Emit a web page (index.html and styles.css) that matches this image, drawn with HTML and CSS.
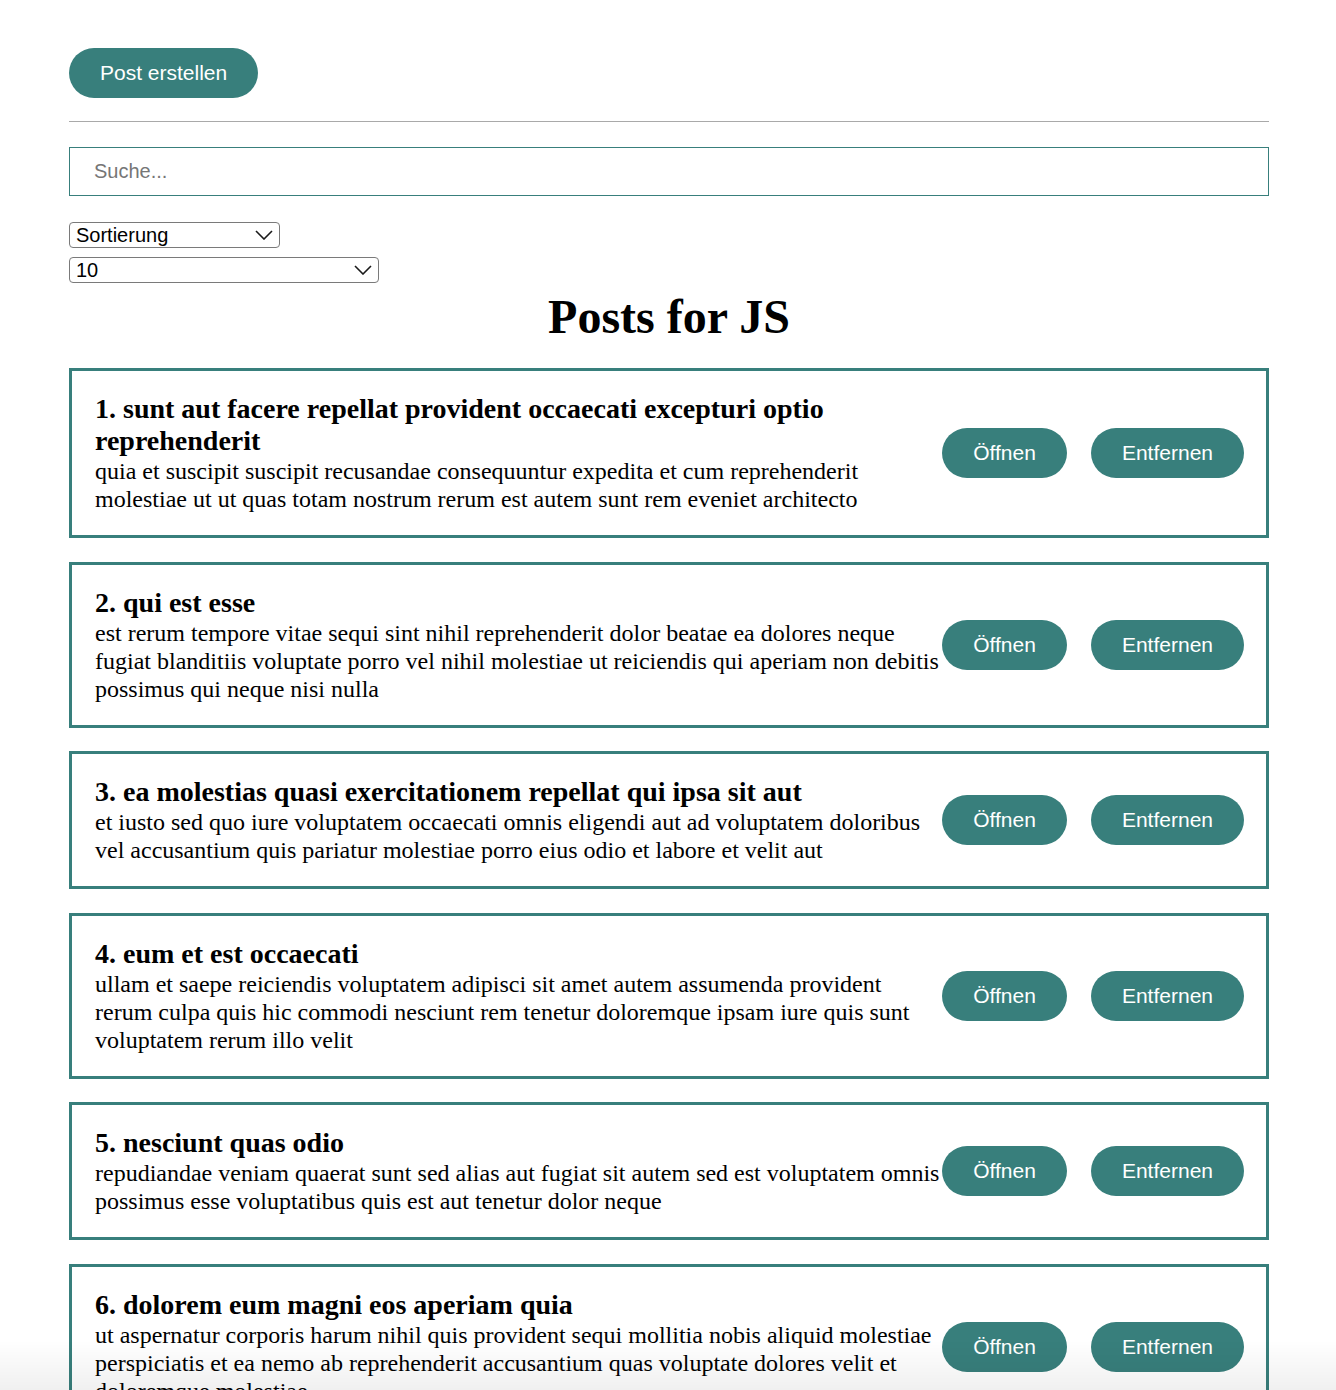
FILE: index.html
```html
<!DOCTYPE html>
<html lang="de">
<head>
<meta charset="utf-8">
<title>Posts for JS</title>
<link rel="stylesheet" href="styles.css">
</head>
<body>
<div class="app">
  <button class="btn btn-create">Post erstellen</button>
  <hr class="divider">
  <input class="search" type="text" placeholder="Suche...">
  <div class="filters">
    <div class="select-wrap select-sort">
      <select class="select">
        <option>Sortierung</option>
        <option>Nach Titel</option>
        <option>Nach Beschreibung</option>
      </select>
      <svg class="chevron" width="18" height="10" viewBox="0 0 18 10"><polyline points="1,1 9,9 17,1" fill="none" stroke="#1a1a1a" stroke-width="1.6"/></svg>
    </div>
    <div class="select-wrap select-limit">
      <select class="select">
        <option>10</option>
        <option>25</option>
        <option>50</option>
      </select>
      <svg class="chevron" width="18" height="10" viewBox="0 0 18 10"><polyline points="1,1 9,9 17,1" fill="none" stroke="#1a1a1a" stroke-width="1.6"/></svg>
    </div>
  </div>
  <h1 class="page-title">Posts for JS</h1>
  <div class="post-list">
    <div class="post">
      <div class="post-content">
        <strong class="post-title">1. sunt aut facere repellat provident occaecati excepturi optio reprehenderit</strong>
        <div class="post-body">quia et suscipit suscipit recusandae consequuntur expedita et cum reprehenderit molestiae ut ut quas totam nostrum rerum est autem sunt rem eveniet architecto</div>
      </div>
      <div class="post-actions"><button class="btn">Öffnen</button><button class="btn">Entfernen</button></div>
    </div>
    <div class="post">
      <div class="post-content">
        <strong class="post-title">2. qui est esse</strong>
        <div class="post-body">est rerum tempore vitae sequi sint nihil reprehenderit dolor beatae ea dolores neque fugiat blanditiis voluptate porro vel nihil molestiae ut reiciendis qui aperiam non debitis possimus qui neque nisi nulla</div>
      </div>
      <div class="post-actions"><button class="btn">Öffnen</button><button class="btn">Entfernen</button></div>
    </div>
    <div class="post">
      <div class="post-content">
        <strong class="post-title">3. ea molestias quasi exercitationem repellat qui ipsa sit aut</strong>
        <div class="post-body">et iusto sed quo iure voluptatem occaecati omnis eligendi aut ad voluptatem doloribus vel accusantium quis pariatur molestiae porro eius odio et labore et velit aut</div>
      </div>
      <div class="post-actions"><button class="btn">Öffnen</button><button class="btn">Entfernen</button></div>
    </div>
    <div class="post">
      <div class="post-content">
        <strong class="post-title">4. eum et est occaecati</strong>
        <div class="post-body">ullam et saepe reiciendis voluptatem adipisci sit amet autem assumenda provident rerum culpa quis hic commodi nesciunt rem tenetur doloremque ipsam iure quis sunt voluptatem rerum illo velit</div>
      </div>
      <div class="post-actions"><button class="btn">Öffnen</button><button class="btn">Entfernen</button></div>
    </div>
    <div class="post">
      <div class="post-content">
        <strong class="post-title">5. nesciunt quas odio</strong>
        <div class="post-body">repudiandae veniam quaerat sunt sed alias aut fugiat sit autem sed est voluptatem omnis possimus esse voluptatibus quis est aut tenetur dolor neque</div>
      </div>
      <div class="post-actions"><button class="btn">Öffnen</button><button class="btn">Entfernen</button></div>
    </div>
    <div class="post">
      <div class="post-content">
        <strong class="post-title">6. dolorem eum magni eos aperiam quia</strong>
        <div class="post-body">ut aspernatur corporis harum nihil quis provident sequi mollitia nobis aliquid molestiae perspiciatis et ea nemo ab reprehenderit accusantium quas voluptate dolores velit et doloremque molestiae</div>
      </div>
      <div class="post-actions"><button class="btn">Öffnen</button><button class="btn">Entfernen</button></div>
    </div>
    <div class="post">
      <div class="post-content">
        <strong class="post-title">7. magnam facilis autem</strong>
        <div class="post-body">dolore placeat quibusdam ea quo vitae magni quis enim qui quis quo nemo aut saepe quidem repellat excepturi ut quia sunt ut sequi eos ea sed quas</div>
      </div>
      <div class="post-actions"><button class="btn">Öffnen</button><button class="btn">Entfernen</button></div>
    </div>
    <div class="post">
      <div class="post-content">
        <strong class="post-title">8. dolorem dolore est ipsam</strong>
        <div class="post-body">dignissimos aperiam dolorem qui eum facilis quibusdam animi sint suscipit qui sint possimus cum quaerat magni maiores excepturi ipsam ut commodi dolor voluptatum modi aut vitae</div>
      </div>
      <div class="post-actions"><button class="btn">Öffnen</button><button class="btn">Entfernen</button></div>
    </div>
    <div class="post">
      <div class="post-content">
        <strong class="post-title">9. nesciunt iure omnis dolorem tempora et accusantium</strong>
        <div class="post-body">consectetur animi nesciunt iure dolore enim quia ad veniam autem ut quam aut nobis et est aut quod aut provident voluptas autem voluptas</div>
      </div>
      <div class="post-actions"><button class="btn">Öffnen</button><button class="btn">Entfernen</button></div>
    </div>
    <div class="post">
      <div class="post-content">
        <strong class="post-title">10. optio molestias id quia eum</strong>
        <div class="post-body">quo et expedita modi cum officia vel magni doloribus qui repudiandae vero nisi sit quos veniam quod sed accusamus veritatis error</div>
      </div>
      <div class="post-actions"><button class="btn">Öffnen</button><button class="btn">Entfernen</button></div>
    </div>
  </div>
</div>
<div class="bottom-shade"></div>
</body>
</html>
```
FILE: styles.css
```css
* {
  box-sizing: border-box;
}

body {
  margin: 0;
  padding-left: 2px;
  background: #ffffff;
  color: #000000;
  font-family: "Liberation Serif", "Times New Roman", serif;
}

.app {
  width: 1200px;
  margin: 0 auto;
  padding-top: 48px;
}

.btn {
  display: inline-flex;
  align-items: center;
  justify-content: center;
  height: 50px;
  padding: 0 31px;
  border: none;
  border-radius: 25px;
  background: #387f7c;
  color: #ffffff;
  font-family: "Liberation Sans", Arial, Helvetica, sans-serif;
  font-size: 21px;
  white-space: nowrap;
  cursor: pointer;
}

.divider {
  border: 0;
  border-top: 1px solid #a9a9a9;
  margin: 23px 0 25px;
  height: 0;
}

.search {
  display: block;
  width: 100%;
  height: 49px;
  padding: 0 24px;
  border: 1px solid #387f7c;
  border-radius: 0;
  font-family: "Liberation Sans", Arial, sans-serif;
  font-size: 20px;
  color: #000;
  outline: none;
}

.search::placeholder {
  color: #767676;
}

.filters {
  display: flex;
  flex-direction: column;
  align-items: flex-start;
  gap: 9px;
  margin-top: 26px;
}

.select-wrap {
  position: relative;
  display: block;
}

.select-sort {
  width: 211px;
}

.select-limit {
  width: 310px;
}

.select {
  appearance: none;
  -webkit-appearance: none;
  display: block;
  width: 100%;
  height: 26px;
  padding: 0 30px 0 6px;
  border: 1px solid #7a7a7a;
  border-radius: 4px;
  background: #ffffff;
  color: #000;
  font-family: "Liberation Sans", Arial, sans-serif;
  font-size: 20px;
  line-height: 24px;
}

.chevron {
  position: absolute;
  right: 7px;
  top: 8px;
  pointer-events: none;
}

.page-title {
  margin: 6px 0 24px;
  text-align: center;
  font-size: 48px;
  line-height: 55px;
  font-weight: bold;
}

.post-list {
  display: flex;
  flex-direction: column;
  gap: 23.5px;
}

.post {
  display: flex;
  align-items: center;
  border: 3px solid #387f7c;
  padding: 22px 22px 22px 23px;
}

.post-content {
  flex: 1;
  min-width: 0;
}

.post-title {
  display: block;
  font-size: 28px;
  line-height: 32px;
  font-weight: bold;
}

.post-body {
  font-size: 24px;
  line-height: 28px;
}

.post-actions {
  display: flex;
  gap: 24px;
  flex-shrink: 0;
}

.bottom-shade {
  position: fixed;
  left: 0;
  right: 0;
  bottom: 0;
  height: 50px;
  background: linear-gradient(rgba(0, 0, 0, 0), rgba(0, 0, 0, 0.06));
  pointer-events: none;
}
```
